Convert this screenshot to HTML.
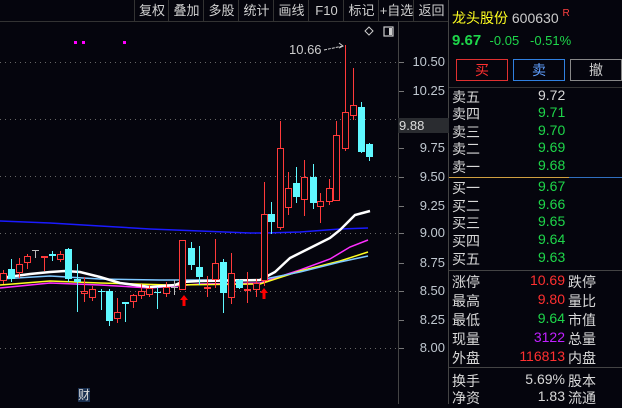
<!DOCTYPE html><html><head><meta charset="utf-8"><style>
body{margin:0;width:622px;height:404px;background:#05050d;overflow:hidden;font-family:"Liberation Sans","Noto Sans CJK SC",sans-serif;position:relative}
.t{position:absolute;white-space:nowrap;font-size:13px}
.tb{position:absolute;top:0;height:21px;line-height:22px;color:#d0d0d0;font-size:13px;text-align:center;border-left:1px solid #333}
.ax{position:absolute;left:405px;color:#c0c8d0;font-size:13px;width:40px;text-align:right}
.r{position:absolute;font-size:13px;white-space:nowrap}
.w{color:#d8d8d8}.g{color:#1ed64a}.rd{color:#ff3030}
</style></head><body>
<div style="position:absolute;left:0;top:21px;width:448px;height:1px;background:#333"></div>
<div class="tb" style="left:134px;width:34px">复权</div>
<div class="tb" style="left:168px;width:35px">叠加</div>
<div class="tb" style="left:203px;width:35px">多股</div>
<div class="tb" style="left:238px;width:35px">统计</div>
<div class="tb" style="left:273px;width:35px">画线</div>
<div class="tb" style="left:308px;width:35px">F10</div>
<div class="tb" style="left:343px;width:35px">标记</div>
<div class="tb" style="left:378px;width:35px">+自选</div>
<div class="tb" style="left:413px;width:35px">返回</div>
<svg width="622" height="404" style="position:absolute;left:0;top:0">
<g stroke="#666" stroke-dasharray="1,4" stroke-width="1">
<line x1="0" y1="62.5" x2="398" y2="62.5"/><line x1="0" y1="119.5" x2="398" y2="119.5"/><line x1="0" y1="176.5" x2="398" y2="176.5"/><line x1="0" y1="233.5" x2="398" y2="233.5"/><line x1="0" y1="291.5" x2="398" y2="291.5"/><line x1="0" y1="348.5" x2="398" y2="348.5"/></g>
<line x1="398.5" y1="21" x2="398.5" y2="404" stroke="#444"/>
<line x1="448.5" y1="0" x2="448.5" y2="404" stroke="#444"/>
<g stroke="#777"><line x1="399" y1="62.5" x2="404" y2="62.5"/><line x1="399" y1="91.5" x2="404" y2="91.5"/><line x1="399" y1="148.5" x2="404" y2="148.5"/><line x1="399" y1="177.5" x2="404" y2="177.5"/><line x1="399" y1="206.5" x2="404" y2="206.5"/><line x1="399" y1="233.5" x2="404" y2="233.5"/><line x1="399" y1="263.5" x2="404" y2="263.5"/><line x1="399" y1="291.5" x2="404" y2="291.5"/><line x1="399" y1="320.5" x2="404" y2="320.5"/><line x1="399" y1="348.5" x2="404" y2="348.5"/></g>
<rect x="74" y="41" width="3" height="3" fill="#f0f"/><rect x="82" y="41" width="3" height="3" fill="#f0f"/><rect x="123" y="41" width="3" height="3" fill="#f0f"/>
<path d="M369 27 l4 4 l-4 4 l-4 -4z" fill="none" stroke="#ccc"/>
<rect x="384" y="27" width="9" height="9" fill="none" stroke="#ccc" stroke-width="1.2"/><rect x="389" y="28" width="3" height="7" fill="#ccc"/>
<path d="M324 50 L343 46" stroke="#ccc" stroke-dasharray="3,1" fill="none"/><path d="M339 43 l4 3 l-4 2" stroke="#ccc" fill="none"/>
<g fill="none" stroke-width="1.5">
<polyline stroke="#1a1aff" points="0,221 50,223 100,226 150,229 200,231 250,233 265,233 300,232 340,229 368,228"/>
<polyline stroke="#ff2fff" points="0,288 50,283 100,285 150,288 200,284 260,283 300,270 330,259 350,247 368,240"/>
<polyline stroke="#ffff20" points="0,285 50,281 100,283 170,285 260,284 300,271 340,261 368,252"/>
<polyline stroke="#7ec8ff" points="0,279 50,276 100,279 160,280 260,280 300,272 340,262 368,256"/>
<polyline stroke="#fff" stroke-width="2.5" points="0,278 30,274 50,272 65,271 80,272 100,277 120,283 150,287 175,285 182,282 200,281 260,280 275,272 290,258 310,248 330,238 340,230 355,215 370,211"/>
</g>
<g id="c"></g>
<path d="M184 295 l-4 5 h2.5 v6 h3 v-6 h2.5z" fill="#f00"/><path d="M264 288 l-4 5 h2.5 v6 h3 v-6 h2.5z" fill="#f00"/>
</svg>
<div class="t" style="left:289px;top:42px;color:#ccc">10.66</div>
<div class="t" style="left:78px;top:388px;color:#ddd;background:#1a3050;font-size:12px;line-height:14px">财</div>
<div class="ax" style="top:54px">10.50</div><div class="ax" style="top:83px">10.25</div>
<div class="ax" style="top:140px">9.75</div><div class="ax" style="top:169px">9.50</div><div class="ax" style="top:198px">9.25</div><div class="ax" style="top:225px">9.00</div><div class="ax" style="top:255px">8.75</div><div class="ax" style="top:283px">8.50</div><div class="ax" style="top:312px">8.25</div><div class="ax" style="top:340px">8.00</div>
<div style="position:absolute;left:398px;top:118px;width:50px;height:15px;background:#2a2c30;color:#ddd;font-size:13px;line-height:15px;padding-left:1px">9.88</div>
<div class="r" style="left:452px;top:8px;font-size:14px"><span style="color:#ffff20">龙头股份</span> <span style="color:#ccc">600630</span> <span style="color:#ff4040;font-size:10px;vertical-align:top">R</span></div>
<div class="r g" style="left:452px;top:32px;font-size:15px"><b>9.67</b>&nbsp;&nbsp;<span style="font-size:13px">-0.05&nbsp;&nbsp;&nbsp;-0.51%</span></div>
<div style="position:absolute;left:456px;top:59px;width:50px;height:20px;border:1px solid #e03030;color:#ff3030;text-align:center;line-height:20px;font-size:14px">买</div>
<div style="position:absolute;left:513px;top:59px;width:50px;height:20px;border:1px solid #3080e0;color:#60a0ff;text-align:center;line-height:20px;font-size:14px">卖</div>
<div style="position:absolute;left:570px;top:59px;width:50px;height:20px;border:1px solid #888;color:#ccc;text-align:center;line-height:20px;font-size:14px">撤</div>
<div style="position:absolute;left:449px;top:87px;width:173px;height:1px;background:#333"></div>
<div style="position:absolute;left:449px;top:177px;width:120px;height:1px;background:#d0a040"></div><div style="position:absolute;left:569px;top:177px;width:53px;height:1px;background:#3070c0"></div>
<div style="position:absolute;left:449px;top:270px;width:173px;height:1px;background:#444"></div>
<div style="position:absolute;left:449px;top:367px;width:173px;height:1px;background:#444"></div>
<div id="rows"></div>
<script>
var rows=[["卖五","9.72","w",96],["卖四","9.71","g",113],["卖三","9.70","g",131],["卖二","9.69","g",148],["卖一","9.68","g",166],["买一","9.67","g",187],["买二","9.66","g",205],["买三","9.65","g",222],["买四","9.64","g",240],["买五","9.63","g",258]];
var s="";rows.forEach(function(r){s+='<div class="r w" style="left:452px;top:'+(r[3]-9)+'px;font-size:14px">'+r[0]+'</div><div class="r '+r[2]+'" style="left:538px;top:'+(r[3]-9)+'px;font-size:14px">'+r[1]+'</div>';});
var st=[["涨停","10.69","rd","跌停",281],["最高","9.80","rd","量比",300],["最低","9.64","g","市值",319],["现量","3122","m","总量",338],["外盘","116813","rd","内盘",357],["换手","5.69%","w","股本",380],["净资","1.83","w","流通",397]];
st.forEach(function(r){var c=r[2]=="m"?'style="color:#c020ff"':'';s+='<div class="r w" style="left:452px;top:'+(r[4]-9)+'px;font-size:14px">'+r[0]+'</div><div class="r '+r[2]+'" '+(r[2]=="m"?'':'')+' style="right:'+(622-565)+'px;top:'+(r[4]-9)+'px;font-size:14px;'+(r[2]=="m"?'color:#c020ff':'')+'">'+r[1]+'</div><div class="r w" style="left:568px;top:'+(r[4]-9)+'px;font-size:14px">'+r[3]+'</div>';});
document.getElementById("rows").innerHTML=s;
var C=[[3,273,280,270,284,"r"],[11,269,279,259,282,"c"],[19,264,272,258,278,"r"],[27,256,262,254,269,"r"],[35,250,251,251,258,"w"],[44,256,257,256,271,"r"],[52,254,256,251,261,"c"],[60,254,259,251,262,"r"],[68,249,279,248,282,"c"],[77,279,282,264,312,"c"],[84,291,293,277,302,"r"],[92,289,297,286,301,"r"],[101,291,292,289,310,"c"],[109,291,321,289,326,"c"],[117,312,318,298,323,"r"],[125,302,304,302,322,"c"],[133,295,301,294,308,"r"],[141,291,295,284,299,"r"],[149,288,294,285,297,"r"],[157,292,293,287,309,"c"],[166,287,293,282,297,"r"],[174,287,288,280,295,"w"],[182,240,289,240,290,"r"],[191,248,265,242,270,"c"],[199,267,277,246,285,"c"],[207,287,288,276,297,"r"],[215,263,279,239,288,"r"],[223,262,293,259,313,"c"],[231,273,297,253,304,"r"],[239,280,288,279,289,"c"],[247,289,290,272,303,"r"],[256,283,289,279,297,"r"],[264,214,280,182,286,"r"],[271,214,222,202,234,"c"],[280,148,227,121,230,"r"],[288,188,207,172,215,"r"],[296,183,197,167,203,"c"],[304,177,199,160,216,"r"],[313,177,203,164,209,"c"],[320,201,206,193,223,"r"],[329,188,201,179,205,"r"],[336,135,200,121,201,"r"],[345,112,148,45,151,"r"],[353,105,115,68,120,"r"],[361,107,152,102,153,"c"],[369,144,157,143,161,"c"]];
var g="";C.forEach(function(k){var x=k[0],col=k[5]=="r"?"#ff3a3a":k[5]=="c"?"#5ff8ff":"#bbb";
g+='<line x1="'+(x+.5)+'" y1="'+k[3]+'" x2="'+(x+.5)+'" y2="'+k[4]+'" stroke="'+col+'"/>';
var h=Math.max(1,k[2]-k[1]);
if(k[5]=="r")g+='<rect x="'+(x-2.5)+'" y="'+(k[1]+.5)+'" width="6" height="'+h+'" fill="#05050d" stroke="'+col+'"/>';
else if(k[5]=="c")g+='<rect x="'+(x-3)+'" y="'+k[1]+'" width="7" height="'+h+'" fill="'+col+'"/>';
else g+='<line x1="'+(x-3)+'" y1="'+(k[1]+.5)+'" x2="'+(x+4)+'" y2="'+(k[1]+.5)+'" stroke="'+col+'"/>';});
document.getElementById("c").innerHTML=g;
</script>
</body></html>
